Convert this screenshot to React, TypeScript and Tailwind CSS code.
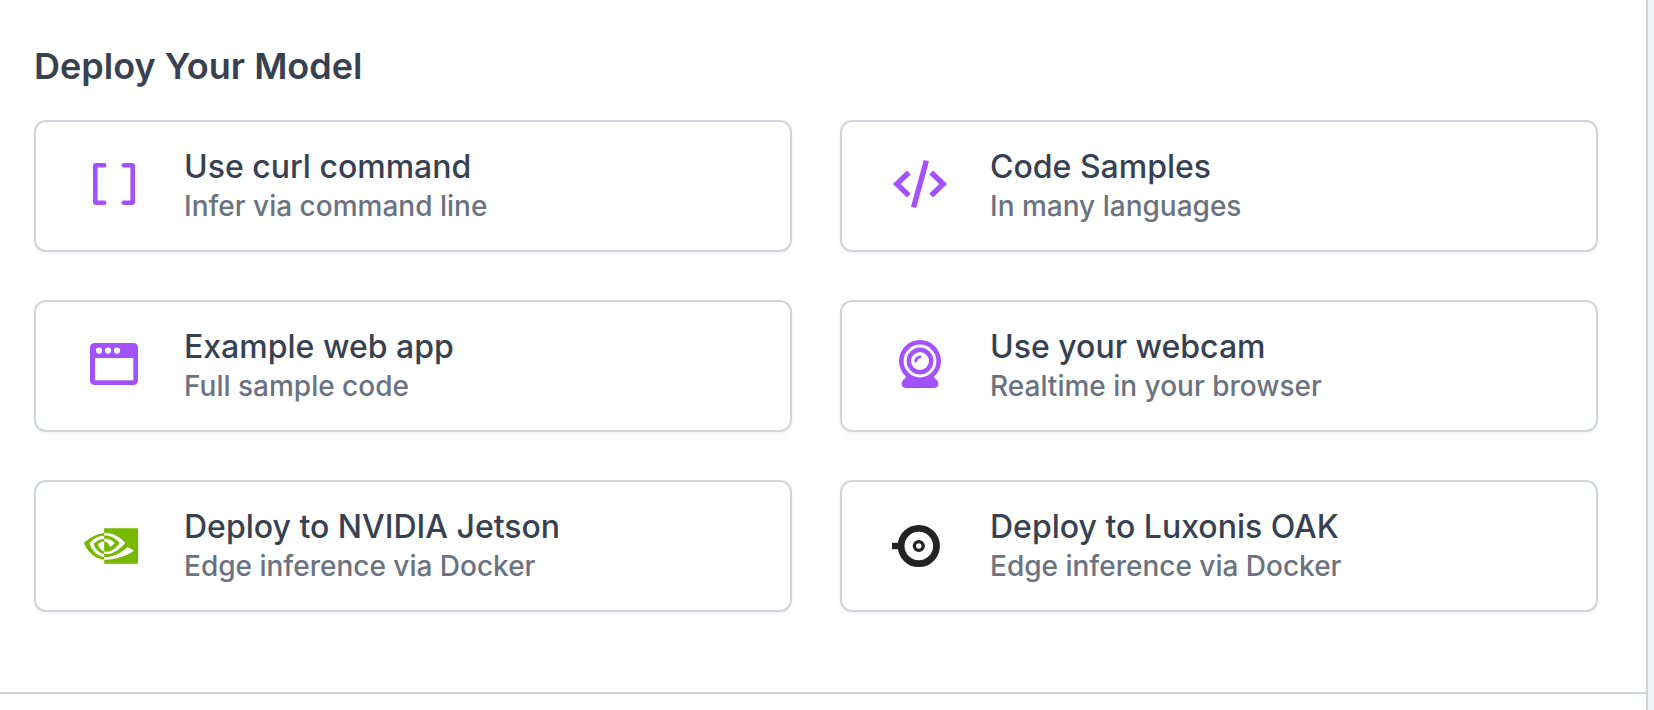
// DeployOptions.tsx
import React from 'react';
import { SiNvidia } from 'react-icons/si';

interface DeployOption {
    title: string;
    description: string;
    icon: React.ReactNode;
}

/* ########################################################################## */
/*                                    ICONS                                   */
/* ########################################################################## */

const BracketsIcon: React.FC = () => (
    <svg viewBox="0 0 60 60" className="h-15 w-15" fill="none" stroke="currentColor" strokeWidth="4.6" aria-hidden="true">
        <path d="M20.2 9.3H12.3Q11.3 9.3 11.3 10.3V45.7Q11.3 46.7 12.3 46.7H20.2" strokeLinecap="round" />
        <path d="M39.8 9.3H47.7Q48.7 9.3 48.7 10.3V45.7Q48.7 46.7 47.7 46.7H39.8" strokeLinecap="round" />
    </svg>
);

const CodeIcon: React.FC = () => (
    <svg viewBox="0 0 60 60" className="h-15 w-15" fill="none" stroke="currentColor" strokeWidth="5.4" aria-hidden="true">
        <path d="M18.8 16.5 6.8 28l12 11.5" />
        <path d="M41.2 16.5 53.2 28l-12 11.5" />
        <path d="M36.4 4.6 23.6 51.4" />
    </svg>
);

const WindowIcon: React.FC = () => (
    <svg viewBox="0 0 60 60" className="h-15 w-15" fill="currentColor" aria-hidden="true">
        <rect x="6" y="7" width="48" height="42" rx="4.5" />
        <rect x="11" y="22" width="38.3" height="22.3" fill="#fff" />
        <circle cx="15" cy="14.6" r="3.1" fill="#fff" />
        <circle cx="24" cy="14.6" r="3.1" fill="#fff" />
        <circle cx="33" cy="14.6" r="3.1" fill="#fff" />
    </svg>
);

const WebcamIcon: React.FC = () => (
    <svg viewBox="0 0 60 60" className="h-15 w-15" fill="currentColor" aria-hidden="true">
        <path d="M17 40h26l4.2 4.4q1.4 1.6 1.2 3.6-.4 4-4.4 4H16q-4 0-4.4-4-.2-2 1.2-3.6z" />
        <circle cx="30" cy="25" r="21" />
        <circle cx="30" cy="25" r="16.4" fill="#fff" />
        <circle cx="30" cy="25" r="13.4" />
        <circle cx="30" cy="25" r="9" fill="#fff" />
        <path d="M25.7 25.2q.4-3.8 4.5-4.4" fill="none" stroke="currentColor" strokeWidth="2.8" strokeLinecap="round" />
    </svg>
);

const LuxonisIcon: React.FC = () => (
    <svg viewBox="0 0 60 60" className="h-15 w-15" fill="none" stroke="currentColor" aria-hidden="true">
        <path d="M2 30h9" strokeWidth="6.4" />
        <circle cx="28.8" cy="30" r="17.7" strokeWidth="6.8" />
        <circle cx="28.8" cy="30" r="4.4" strokeWidth="3.4" />
    </svg>
);

/* ########################################################################## */
/*                                  VARIABLES                                 */
/* ########################################################################## */

const options: DeployOption[] = [
    {
        title: 'Use curl command',
        description: 'Infer via command line',
        icon: <BracketsIcon />,
    },
    {
        title: 'Code Samples',
        description: 'In many languages',
        icon: <CodeIcon />,
    },
    {
        title: 'Example web app',
        description: 'Full sample code',
        icon: <WindowIcon />,
    },
    {
        title: 'Use your webcam',
        description: 'Realtime in your browser',
        icon: <WebcamIcon />,
    },
    {
        title: 'Deploy to NVIDIA Jetson',
        description: 'Edge inference via Docker',
        icon: <SiNvidia className="h-[54px] w-[54px] text-[#76b900]" aria-hidden="true" />,
    },
    {
        title: 'Deploy to Luxonis OAK',
        description: 'Edge inference via Docker',
        icon: (
            <span className="text-[#232323]">
                <LuxonisIcon />
            </span>
        ),
    },
];

const DeployCard: React.FC<{ option: DeployOption }> = ({ option }) => {
    return (
        <a
            href="#"
            className="flex items-start gap-10 rounded-xl border-2 border-[#d1d5db] bg-white pt-[26px] pr-6 pb-6 pl-12 shadow-[0_2px_4px_rgba(0,0,0,0.05)] hover:border-[#a351fb]"
        >
            <div className="mt-2 flex h-15 w-15 shrink-0 items-center text-[#a351fb]">{option.icon}</div>
            <div className="min-w-0">
                <h3 className="text-[32px] leading-[38px] font-medium text-[#374151]">{option.title}</h3>
                <p className="text-[28px] leading-10 font-medium text-[#6b7280]">{option.description}</p>
            </div>
        </a>
    );
};

const App: React.FC = () => {
    return (
        <div className="min-h-screen bg-[#f3f4f8] pr-1.5 font-['Inter',sans-serif]">
            <main className="min-h-screen border-r-2 border-[#d1d5db] bg-white">
                {/* Deploy options */}
                <section className="border-b-2 border-[#d1d5db] pt-[46px] pr-12 pb-20 pl-[34px]">
                    <h2 className="mb-[34px] text-4xl leading-10 font-semibold text-[#374151]">Deploy Your Model</h2>
                    <div className="grid grid-cols-2 gap-12">
                        {options.map((option) => (
                            <DeployCard key={option.title} option={option} />
                        ))}
                    </div>
                </section>
            </main>
        </div>
    );
};

export default App;
